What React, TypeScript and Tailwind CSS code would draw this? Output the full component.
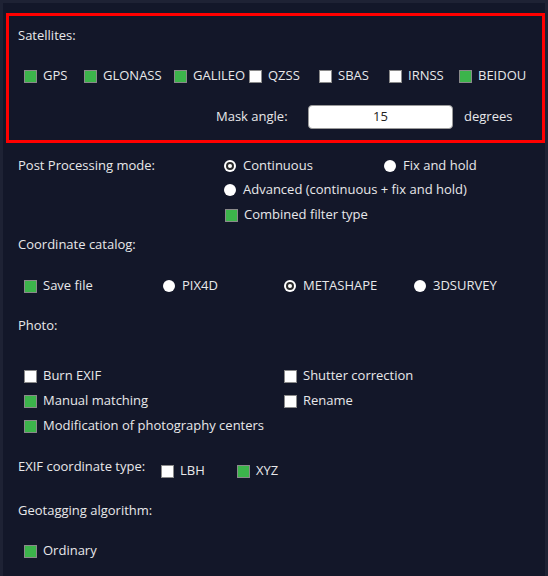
import React from 'react';

function Check({ on, label, className = '' }: { on?: boolean; label: string; className?: string }) {
  return (
    <div className={`flex h-5 items-center ${className}`}>
      <span
        className={`mr-[6px] h-[13px] w-[13px] shrink-0 border border-[#8a8a8a] ${on ? 'bg-[#3cb44b]' : 'bg-white'}`}
      />
      <span className="whitespace-nowrap">{label}</span>
    </div>
  );
}

function Radio({ on, label, className = '' }: { on?: boolean; label: string; className?: string }) {
  return (
    <div className={`flex h-5 items-center ${className}`}>
      <span className="mr-[7px] flex h-[12px] w-[12px] shrink-0 items-center justify-center rounded-full bg-white">
        {on && <span className="h-[8px] w-[8px] rounded-full border-2 border-[#2a2a2a] bg-white" />}
      </span>
      <span className="whitespace-nowrap">{label}</span>
    </div>
  );
}

export default function App() {
  return (
    <div
      className="h-[576px] w-[548px] overflow-hidden bg-[#1e2234] px-[3px] pt-[3px] text-[13px] text-[#e8e8ea]"
      style={{ fontFamily: '"Open Sans", "Liberation Sans", sans-serif' }}
    >
      <div className="h-[573px] bg-[#131729] pt-[10px]">
        <div className="ml-[3px] w-[539px] border-[3px] border-[#ff0000] pb-[11px] pl-[9px]">
          <div className="mt-[11px] flex h-[18px] items-center">Satellites:</div>
          <div className="mt-[22px] flex h-[18px] items-center pl-[6px]">
            <Check on label="GPS" className="w-[60px]" />
            <Check on label="GLONASS" className="w-[90px]" />
            <Check on label="GALILEO" className="w-[75px]" />
            <Check label="QZSS" className="w-[70px]" />
            <Check label="SBAS" className="w-[70px]" />
            <Check label="IRNSS" className="w-[70px]" />
            <Check on label="BEIDOU" />
          </div>
          <div className="mt-[20px] flex h-6 items-center pl-[198px]">
            <span className="w-[92px]">Mask angle:</span>
            <div className="flex h-6 w-[145px] items-center justify-center rounded-[4px] border border-[#9a9a9a] bg-white text-[#222]">
              15
            </div>
            <span className="ml-[11px]">degrees</span>
          </div>
        </div>

        <div className="pl-[15px]">
          <div className="mt-[13px] flex">
            <div className="flex h-5 w-[206px] items-center">Post Processing mode:</div>
            <div>
              <div className="flex">
                <Radio on label="Continuous" className="w-[160px]" />
                <Radio label="Fix and hold" />
              </div>
              <Radio label="Advanced (continuous + fix and hold)" className="mt-[4px]" />
              <Check on label="Combined filter type" className="mt-[5px] pl-[1px]" />
            </div>
          </div>

          <div className="mt-[10px] flex h-5 items-center">Coordinate catalog:</div>
          <div className="mt-[21px] flex pl-[6px]">
            <Check on label="Save file" className="w-[139px]" />
            <Radio label="PIX4D" className="w-[121px]" />
            <Radio on label="METASHAPE" className="w-[130px]" />
            <Radio label="3DSURVEY" />
          </div>

          <div className="mt-[20px] flex h-5 items-center">Photo:</div>
          <div className="mt-[30px] flex pl-[6px]">
            <div className="w-[260px]">
              <Check label="Burn EXIF" />
              <Check on label="Manual matching" className="mt-[5px]" />
              <Check on label="Modification of photography centers" className="mt-[5px]" />
            </div>
            <div>
              <Check label="Shutter correction" />
              <Check label="Rename" className="mt-[5px]" />
            </div>
          </div>

          <div className="mt-[21px] flex items-start">
            <div className="flex h-5 w-[143px] items-center">EXIF coordinate type:</div>
            <Check label="LBH" className="mt-[4px] w-[76px]" />
            <Check on label="XYZ" className="mt-[4px]" />
          </div>

          <div className="mt-[20px] flex h-5 items-center">Geotagging algorithm:</div>
          <div className="mt-[20px] pl-[6px]">
            <Check on label="Ordinary" />
          </div>
        </div>
      </div>
    </div>
  );
}
